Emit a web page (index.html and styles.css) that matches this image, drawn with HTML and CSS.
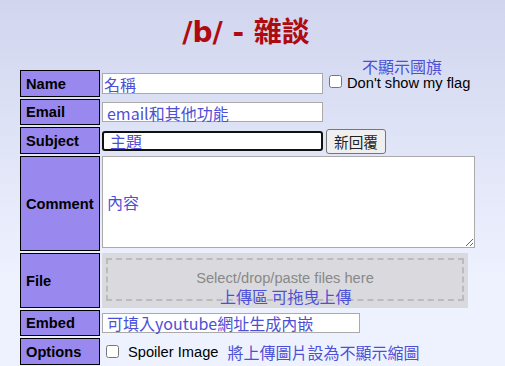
FILE: index.html
```html
<!DOCTYPE html>
<html lang="zh-Hant">
<head>
    <meta charset="UTF-8">
    <meta name="viewport" content="width=device-width, initial-scale=1.0">
    <title>/b/ - 雜談</title>
    <link rel="stylesheet" href="styles.css">
</head>
<body>
    <div class="board-title">/b/ - 雜談</div>

    <form class="post-form" name="post" id="post_form">
        <div class="label">Name</div>
        <div class="field">
            <span class="box">
                <input type="text" name="name" class="text-input w-short" />
                <span class="note note-name">名稱</span>
            </span>
            <label class="flag-opt"><input type="checkbox" name="no_flag" class="check" />Don't show my flag</label>
            <span class="note note-flag">不顯示國旗</span>
        </div>

        <div class="label">Email</div>
        <div class="field">
            <span class="box">
                <input type="text" name="email" class="text-input w-short h-20" />
                <span class="note note-email">email和其他功能</span>
            </span>
        </div>

        <div class="label">Subject</div>
        <div class="field">
            <span class="box">
                <input type="text" name="sub" class="text-input w-short h-20 focused" />
                <span class="note note-sub">主題</span>
            </span>
            <button type="submit" class="btn-submit">新回覆</button>
        </div>

        <div class="label">Comment</div>
        <div class="field field-top">
            <span class="box">
                <textarea name="com" class="comment"></textarea>
                <span class="note note-com">內容</span>
            </span>
        </div>

        <div class="label">File</div>
        <div class="field field-fill">
            <div class="drop-zone">
                <div class="drop-inner"><span class="drop-text">Select/drop/paste files here</span></div>
                <span class="note note-file">上傳區 可拖曳上傳</span>
            </div>
        </div>

        <div class="label">Embed</div>
        <div class="field">
            <span class="box">
                <input type="text" name="embed" class="text-input w-embed h-20" />
                <span class="note note-embed">可填入youtube網址生成內嵌</span>
            </span>
        </div>

        <div class="label">Options</div>
        <div class="field">
            <label class="spoiler-opt"><input type="checkbox" name="spoiler" class="check" />Spoiler Image</label>
            <span class="note-inline">將上傳圖片設為不顯示縮圖</span>
        </div>
    </form>
</body>
</html>
```

FILE: styles.css
```css
html, body {
    margin: 0;
    padding: 0;
}

body {
    height: 366px;
    background: linear-gradient(#d1d5ee, #eef2ff 280px);
    font-family: "Liberation Sans", Arial, "Noto Sans CJK TC", sans-serif;
    font-size: 14.67px;
    color: #000;
    overflow: hidden;
}

.board-title {
    text-align: center;
    padding: 17px 13px 0 0;
    height: 57px;
    box-sizing: border-box;
    font-family: "DejaVu Sans", "Noto Sans CJK TC", sans-serif;
    font-size: 28px;
    font-weight: bold;
    color: #af0a0f;
    line-height: 32px;
}

.post-form {
    display: grid;
    grid-template-columns: 80px auto;
    grid-template-rows: 27px 26px 27px 95px 55px 26px 27px;
    column-gap: 2px;
    row-gap: 2px;
    margin: 13px 0 0 20px;
}

.label {
    box-sizing: border-box;
    display: flex;
    align-items: center;
    padding: 0 5px;
    border: 1px solid #000;
    background: #98e;
    font-weight: bold;
}

.field {
    position: relative;
    display: flex;
    align-items: center;
}

.field-top {
    align-items: flex-start;
}

.field-fill {
    align-items: stretch;
}

.box {
    position: relative;
    display: block;
}

.text-input {
    display: block;
    box-sizing: border-box;
    height: 21px;
    margin: 0;
    padding: 1px 2px;
    border: 1px solid #aaa;
    background: #fff;
    font: inherit;
}

.w-short {
    width: 221px;
}

.w-embed {
    width: 258px;
}

.h-20 {
    height: 20px;
}

.focused {
    border: 2px solid #101010;
    border-radius: 3px;
}

.check {
    width: 13px;
    height: 13px;
    margin: 0 5px 0 0;
}

.flag-opt {
    display: flex;
    align-items: center;
    margin: 0 0 0 6px;
    line-height: 15px;
}

.flag-opt .check {
    margin-top: -5px;
}

.spoiler-opt {
    display: flex;
    align-items: center;
    margin-left: 4px;
}

.spoiler-opt .check {
    margin-right: 9px;
}

.btn-submit {
    box-sizing: border-box;
    width: 60px;
    height: 25px;
    margin: 1px 0 0 3px;
    padding: 0;
    border: 1px solid #767676;
    border-radius: 3px;
    background: #efefef;
    font-family: "Noto Sans CJK TC", sans-serif;
    font-size: 14.67px;
    color: #222;
}

.comment {
    display: block;
    box-sizing: border-box;
    width: 373px;
    height: 92px;
    margin: 0;
    border: 1px solid #aaa;
    background: #fff;
}

.drop-zone {
    position: relative;
    box-sizing: border-box;
    width: 366px;
    padding: 5px 4px 7px 4px;
    background: #dadade;
}

.drop-inner {
    box-sizing: border-box;
    height: 100%;
    display: flex;
    align-items: center;
    justify-content: center;
    border: 2px dashed #bbb;
    color: #888;
    padding-bottom: 2px;
}

.drop-text {
    line-height: 15px;
}

/* 설명용 파란 글씨 */
.note, .note-inline {
    font-family: "Noto Sans CJK TC", sans-serif;
    font-size: 16px;
    line-height: 16px;
    color: #4d50d6;
    white-space: nowrap;
}

.note {
    position: absolute;
}

.note-inline {
    margin-left: 9px;
}

.note-name {
    left: 2px;
    top: 3px;
}

.note-email {
    left: 5px;
    top: 3px;
}

.note-sub {
    left: 8px;
    top: 2px;
}

.note-com {
    left: 5px;
    top: 38px;
}

.note-file {
    left: 118px;
    top: 35px;
}

.note-embed {
    left: 5px;
    top: 2px;
}

.note-flag {
    left: 260px;
    top: -12px;
}
```
